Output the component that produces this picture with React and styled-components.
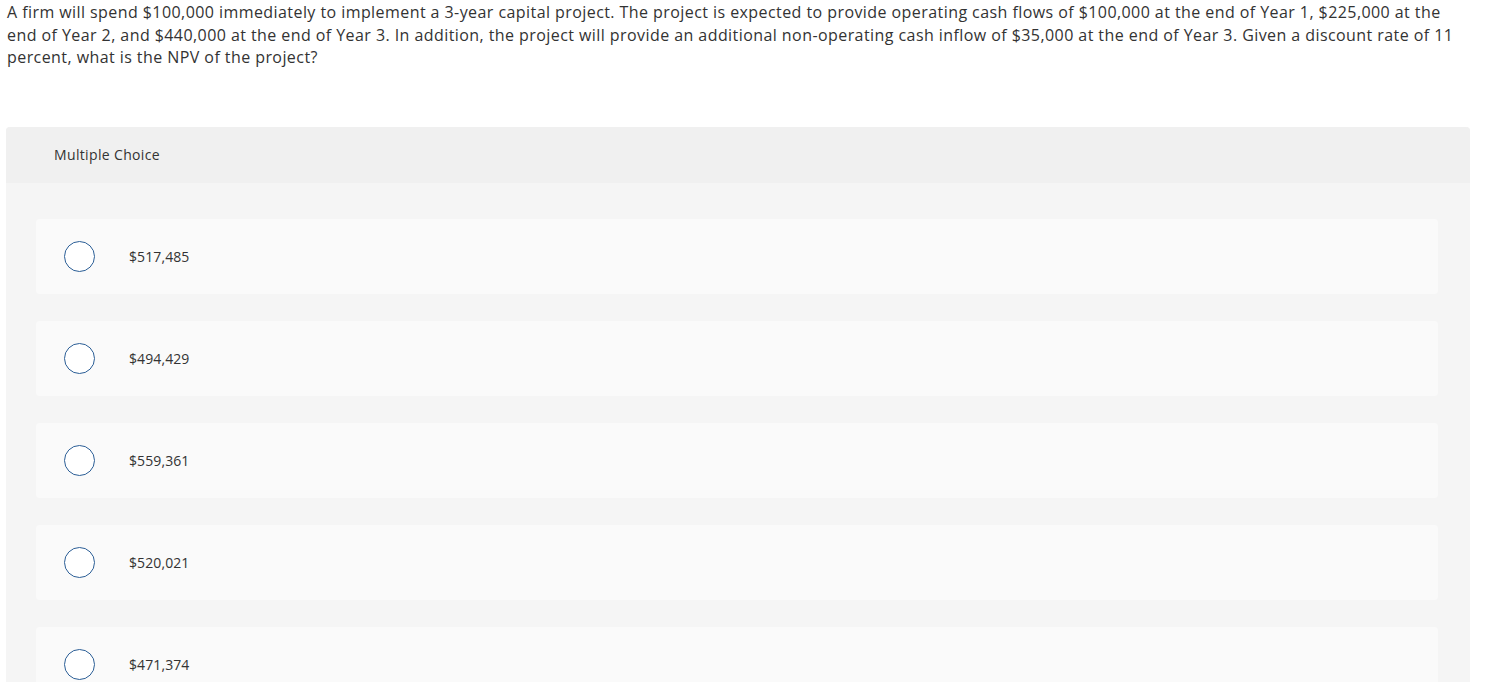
import React from "react";
import styled, { createGlobalStyle } from "styled-components";

const Global = createGlobalStyle`
  html, body { margin: 0; padding: 0; background: #fff; }
  body { font-family: "Open Sans", "Liberation Sans", Arial, sans-serif; color: #333; }
`;

const Page = styled.div`
  padding: 0 32px 0 6px;
`;

const Question = styled.p`
  margin: 0;
  padding: 1px 0 0 1px;
  font-size: 16px;
  line-height: 22.5px;
  letter-spacing: 0.43px;
  color: #333;
`;

const Panel = styled.section`
  margin-top: 58px;
  border-radius: 4px 4px 0 0;
  overflow: hidden;
  background: #f5f5f5;
`;

const Header = styled.div`
  height: 56px;
  display: flex;
  align-items: center;
  padding-left: 48px;
  background: #f0f0f0;
  font-size: 14px;
  letter-spacing: 0.35px;
  color: #333;
`;

const List = styled.div`
  display: flex;
  flex-direction: column;
  gap: 27px;
  padding: 36px 32px 0 30px;
`;

const Option = styled.label`
  height: 75px;
  display: flex;
  align-items: center;
  padding-left: 28px;
  border-radius: 4px;
  background: #fafafa;
  font-size: 14px;
  letter-spacing: 0.1px;
  color: #333;
  cursor: pointer;
`;

const Radio = styled.span`
  box-sizing: border-box;
  width: 31px;
  height: 31px;
  border-radius: 50%;
  border: 1.5px solid #2b5e96;
  background: #fff;
  flex: none;
  margin-right: 34px;
`;

const options = ["$517,485", "$494,429", "$559,361", "$520,021", "$471,374"];

export default function App() {
  return (
    <>
      <Global />
      <Page>
        <Question>
          A firm will spend $100,000 immediately to implement a 3-year capital project. The project is expected to provide operating cash flows of $100,000 at the end of Year 1, $225,000 at the end of Year 2, and $440,000 at the end of Year 3. In addition, the project will provide an additional non-operating cash inflow of $35,000 at the end of Year 3. Given a discount rate of 11 percent, what is the NPV of the project?
        </Question>
        <Panel>
          <Header>Multiple Choice</Header>
          <List>
            {options.map((o) => (
              <Option key={o}>
                <Radio />
                {o}
              </Option>
            ))}
          </List>
        </Panel>
      </Page>
    </>
  );
}
